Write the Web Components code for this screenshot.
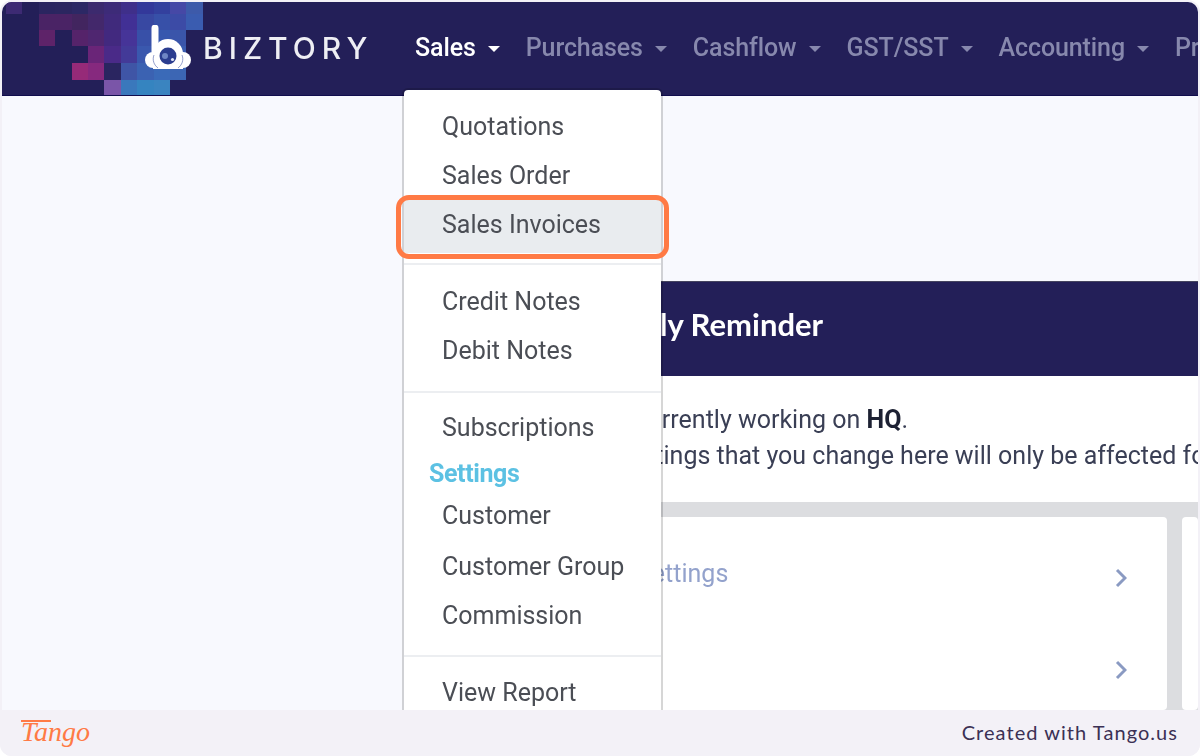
<!DOCTYPE html>
<html lang="en">
<head>
<meta charset="utf-8">
<title>Biztory</title>
<style>
    html, body { margin: 0; padding: 0; background: #fff; }
    body { font-family: "Roboto", "Liberation Sans", sans-serif; }
</style>
</head>
<body>
<biz-app>
    <biz-nav slot="nav">
        <biz-nav-item active>Sales</biz-nav-item>
        <biz-nav-item>Purchases</biz-nav-item>
        <biz-nav-item>Cashflow</biz-nav-item>
        <biz-nav-item>GST/SST</biz-nav-item>
        <biz-nav-item>Accounting</biz-nav-item>
        <biz-nav-item>Pr</biz-nav-item>
    </biz-nav>
    <biz-reminder slot="content"></biz-reminder>
    <biz-menu slot="overlay">
        <biz-menu-item>Quotations</biz-menu-item>
        <biz-menu-item>Sales Order</biz-menu-item>
        <biz-menu-item highlighted>Sales Invoices</biz-menu-item>
        <biz-menu-divider style="margin:10px 0 12px"></biz-menu-divider>
        <biz-menu-item>Credit Notes</biz-menu-item>
        <biz-menu-item>Debit Notes</biz-menu-item>
        <biz-menu-divider style="margin:16px 0 10px"></biz-menu-divider>
        <biz-menu-item>Subscriptions</biz-menu-item>
        <biz-menu-item heading style="--item-h:42px;margin-top:1px">Settings</biz-menu-item>
        <biz-menu-item style="--item-h:42px;margin-bottom:5px">Customer</biz-menu-item>
        <biz-menu-item>Customer Group</biz-menu-item>
        <biz-menu-item>Commission</biz-menu-item>
        <biz-menu-divider style="margin:15px 0 11px"></biz-menu-divider>
        <biz-menu-item>View Report</biz-menu-item>
    </biz-menu>
    <tango-footer slot="footer"></tango-footer>
</biz-app>

<script>
class BizApp extends HTMLElement {
    constructor() {
        super();
        this.attachShadow({ mode: 'open' });
        this.shadowRoot.innerHTML = `
            <style>
                :host {
                    display: flex;
                    flex-direction: column;
                    width: 1200px;
                    height: 756px;
                    background: #f3f1f7;
                    border-radius: 12px;
                    overflow: hidden;
                }
                .screen {
                    position: relative;
                    flex: 1;
                    min-height: 0;
                    margin: 2px 2px 0;
                    background: #f8f9fe;
                    border-radius: 10px 10px 0 0;
                    overflow: hidden;
                }
            </style>
            <div class="screen">
                <slot name="nav"></slot>
                <slot name="content"></slot>
                <slot name="overlay"></slot>
            </div>
            <slot name="footer"></slot>
        `;
    }
}

class BizMosaic extends HTMLElement {
    constructor() {
        super();
        this.attachShadow({ mode: 'open' });
        const rows = [
            ['#3d2a73', '', '#2a2560', '#2b2660', '#2c2865', '#3c2a6e', '#3d2b78', '#3f2f8a', '#33389a', '#33409e', '#4648a6', '#3d5aaa'],
            ['', '', '#4a2365', '#4a2365', '#42255f', '#43286b', '#402a7c', '#413095', '#3848a2', '#3750a8', '#3c4ba6', '#3a5cb0'],
            ['', '', '#5e2369', '', '#55236a', '#4f2670', '#42297f', '#463498', '#3850a8', '#3658ae', '#3a55aa', ''],
            ['', '', '', '', '', '#6a2578', '#4a2a88', '#433a98', '#3a58ae', '#3a60b2', '#3a5cb0', ''],
            ['', '', '', '', '#962a78', '#86297e', '#2a2560', '#3f55a6', '#3b62b2', '#3a6ab8', '#3c66b4', ''],
            ['', '', '', '', '', '', '#7a55a8', '#3a78bc', '#3584c0', '#3a84c0', '', '']
        ];
        const cells = rows.flat().map(c => `<i style="background:${c || 'transparent'}"></i>`).join('');
        this.shadowRoot.innerHTML = `
            <style>
                :host {
                    position: absolute;
                    left: 4px;
                    top: 0;
                    display: grid;
                    grid-template-columns: repeat(12, 16.4px);
                    grid-template-rows: 12px 16px 16px 17px 17px 16px;
                    filter: blur(.6px);
                }
            </style>
            ${cells}
        `;
    }
}

class BizLogo extends HTMLElement {
    constructor() {
        super();
        this.attachShadow({ mode: 'open' });
        this.shadowRoot.innerHTML = `
            <style>
                :host {
                    position: relative;
                    display: flex;
                    align-items: center;
                    gap: 12px;
                }
                svg { display: block; filter: blur(.5px); }
                .word {
                    font: 500 30px/1 "Inter", "Liberation Sans", sans-serif;
                    letter-spacing: 6px;
                    color: #eeeef4;
                    filter: blur(.6px);
                }
            </style>
            <svg width="46" height="46" viewBox="0 0 46 46">
                <circle cx="8" cy="35" r="8" fill="#fff"/>
                <circle cx="38" cy="35" r="8" fill="#fff"/>
                <rect x="8" y="36" width="30" height="8" fill="#fff"/>
                <path d="M10 3v24" stroke="#fff" stroke-width="7" stroke-linecap="round" fill="none"/>
                <circle cx="23" cy="29" r="15" fill="#fff"/>
                <circle cx="23" cy="31" r="8.5" fill="#2b3d8f"/>
                <circle cx="20" cy="31" r="3" fill="#6f86c4"/>
                <circle cx="27.5" cy="34.5" r="1.6" fill="#dfe5f5"/>
                <path d="M9 30c-2 5 0 10 4 13M37 30c2 5 0 10-4 13" stroke="#3a4fa0" stroke-width="1" opacity=".55" fill="none"/>
            </svg>
            <span class="word">BIZTORY</span>
        `;
    }
}

class BizNav extends HTMLElement {
    constructor() {
        super();
        this.attachShadow({ mode: 'open' });
        this.shadowRoot.innerHTML = `
            <style>
                :host {
                    position: relative;
                    display: flex;
                    align-items: center;
                    height: 94px;
                    padding-bottom: 2px;
                    background: #231f58;
                    border-bottom: 1px solid #110d4e;
                    box-sizing: border-box;
                    overflow: hidden;
                }
                .brand {
                    flex: none;
                    width: 413px;
                    box-sizing: border-box;
                    padding-left: 143px;
                }
                .items {
                    display: flex;
                    flex: none;
                    gap: 26px;
                }
            </style>
            <biz-mosaic></biz-mosaic>
            <div class="brand"><biz-logo></biz-logo></div>
            <div class="items"><slot></slot></div>
        `;
    }
}

class BizNavItem extends HTMLElement {
    constructor() {
        super();
        this.attachShadow({ mode: 'open' });
        this.shadowRoot.innerHTML = `
            <style>
                :host {
                    display: flex;
                    align-items: center;
                    gap: 12px;
                    flex: none;
                    font: 500 25px/32px "Roboto", "Liberation Sans", sans-serif;
                    letter-spacing: -.1px;
                    color: #8788ad;
                }
                :host([active]) { color: #fff; }
                .label { filter: blur(.6px); }
                svg { display: block; margin-top: 2px; }
            </style>
            <span class="label"><slot></slot></span>
            <svg width="12" height="6" viewBox="0 0 12 6"><path d="M0 0h12L6 6z" fill="currentColor"/></svg>
        `;
    }
}

class BizMenu extends HTMLElement {
    constructor() {
        super();
        this.attachShadow({ mode: 'open' });
        this.shadowRoot.innerHTML = `
            <style>
                :host {
                    position: absolute;
                    left: 400px;
                    top: 86px;
                    display: block;
                    width: 261px;
                    box-sizing: border-box;
                    padding: 12px 0 12px;
                    background: #fff;
                    background-clip: padding-box;
                    border: 2px solid rgba(0, 0, 0, .16);
                    border-radius: 6px;
                }
            </style>
            <slot></slot>
        `;
    }
}

class BizMenuItem extends HTMLElement {
    constructor() {
        super();
        this.attachShadow({ mode: 'open' });
        this.shadowRoot.innerHTML = `
            <style>
                :host {
                    position: relative;
                    display: block;
                    height: var(--item-h, 49px);
                    padding-left: 38px;
                    font: 400 25px/var(--item-h, 49px) "Roboto", "Liberation Sans", sans-serif;
                    color: #4b4e55;
                }
                :host([heading]) {
                    padding-left: 25px;
                    font-weight: 700;
                    color: #5cc1e3;
                }
                :host([highlighted]) {
                    height: 53px;
                    background: #e9ecef;
                }
                :host([highlighted])::after {
                    content: "";
                    position: absolute;
                    inset: -5px -8px -6px -8px;
                    border: 5px solid #ff7a45;
                    border-radius: 13px;
                }
                span { display: block; height: 49px; filter: blur(.6px); }
                :host([heading]) span { height: 42px; letter-spacing: -.4px; }
            </style>
            <span><slot></slot></span>
        `;
    }
}

class BizMenuDivider extends HTMLElement {
    constructor() {
        super();
        this.attachShadow({ mode: 'open' });
        this.shadowRoot.innerHTML = `
            <style>
                :host {
                    display: block;
                    height: 2px;
                    background: #eceef1;
                }
            </style>
        `;
    }
}

class BizSettingRow extends HTMLElement {
    constructor() {
        super();
        this.attachShadow({ mode: 'open' });
        this.shadowRoot.innerHTML = `
            <style>
                :host {
                    display: flex;
                    align-items: center;
                    justify-content: space-between;
                    height: 92px;
                    box-sizing: border-box;
                    padding-right: 40px;
                    font: 400 25px/32px "Roboto", "Liberation Sans", sans-serif;
                    color: #93a2cc;
                }
                .label { margin-top: -8px; filter: blur(.6px); }
                svg { display: block; flex: none; }
            </style>
            <span class="label"><slot></slot></span>
            <svg width="12" height="20" viewBox="0 0 12 20"><path d="M2 2l8 8-8 8" fill="none" stroke="#8a9ac2" stroke-width="3"/></svg>
        `;
    }
}

class BizReminder extends HTMLElement {
    constructor() {
        super();
        this.attachShadow({ mode: 'open' });
        this.shadowRoot.innerHTML = `
            <style>
                :host {
                    display: block;
                    margin: 185px 0 0 560px;
                    white-space: nowrap;
                }
                .head {
                    display: flex;
                    align-items: center;
                    height: 95px;
                    box-sizing: border-box;
                    padding-left: 51px;
                    padding-bottom: 11px;
                    background: #231f58;
                    border-top: 1px solid #45445f;
                    color: #fff;
                    font: 700 31px/36px "Lato", "Liberation Sans", sans-serif;
                }
                .head span, .body span { filter: blur(.6px); }
                .body {
                    height: 126px;
                    box-sizing: border-box;
                    padding-top: 26px;
                    background: #fff;
                    overflow: hidden;
                    font: 400 25px/36px "Roboto", "Liberation Sans", sans-serif;
                    color: #3a3f55;
                }
                .line { display: block; }
                .line.a { padding-left: 73px; }
                .line.b { padding-left: 59px; }
                b { font-weight: 700; color: #1d2133; }
                .cards {
                    display: flex;
                    gap: 15px;
                    height: 193px;
                    padding-top: 15px;
                    background: #dcdde0;
                }
                .card {
                    flex: none;
                    box-sizing: border-box;
                    background: #fff;
                    border-radius: 4px;
                }
                .card.first {
                    width: 605px;
                    padding: 15px 0 0 75px;
                }
                .card.second { flex: 1; }
            </style>
            <div class="head"><span>Daily Reminder</span></div>
            <div class="body">
                <span class="line a">currently working on <b>HQ</b>.</span>
                <span class="line b">settings that you change here will only be affected for</span>
            </div>
            <div class="cards">
                <div class="card first">
                    <biz-setting-row>Settings</biz-setting-row>
                    <biz-setting-row></biz-setting-row>
                </div>
                <div class="card second"></div>
            </div>
        `;
    }
}

class TangoFooter extends HTMLElement {
    constructor() {
        super();
        this.attachShadow({ mode: 'open' });
        this.shadowRoot.innerHTML = `
            <style>
                :host {
                    display: flex;
                    align-items: center;
                    justify-content: space-between;
                    flex: none;
                    height: 46px;
                    box-sizing: border-box;
                    padding: 0 22px 2px 21px;
                    background: #f3f1f7;
                }
                .logo {
                    position: relative;
                    font: italic 400 28px/44px "Liberation Serif", serif;
                    color: #ff7a45;
                }
                .logo::before {
                    content: "";
                    position: absolute;
                    left: 0;
                    top: 10px;
                    width: 30px;
                    height: 1.5px;
                    background: #ff7a45;
                }
                .credit {
                    font: 400 20px/44px "Lato", "Liberation Sans", sans-serif;
                    letter-spacing: 1.05px;
                    color: #3b3054;
                }
            </style>
            <span class="logo">Tango</span>
            <span class="credit">Created with Tango.us</span>
        `;
    }
}

customElements.define('biz-app', BizApp);
customElements.define('biz-mosaic', BizMosaic);
customElements.define('biz-logo', BizLogo);
customElements.define('biz-nav', BizNav);
customElements.define('biz-nav-item', BizNavItem);
customElements.define('biz-menu', BizMenu);
customElements.define('biz-menu-item', BizMenuItem);
customElements.define('biz-menu-divider', BizMenuDivider);
customElements.define('biz-setting-row', BizSettingRow);
customElements.define('biz-reminder', BizReminder);
customElements.define('tango-footer', TangoFooter);
</script>
</body>
</html>
